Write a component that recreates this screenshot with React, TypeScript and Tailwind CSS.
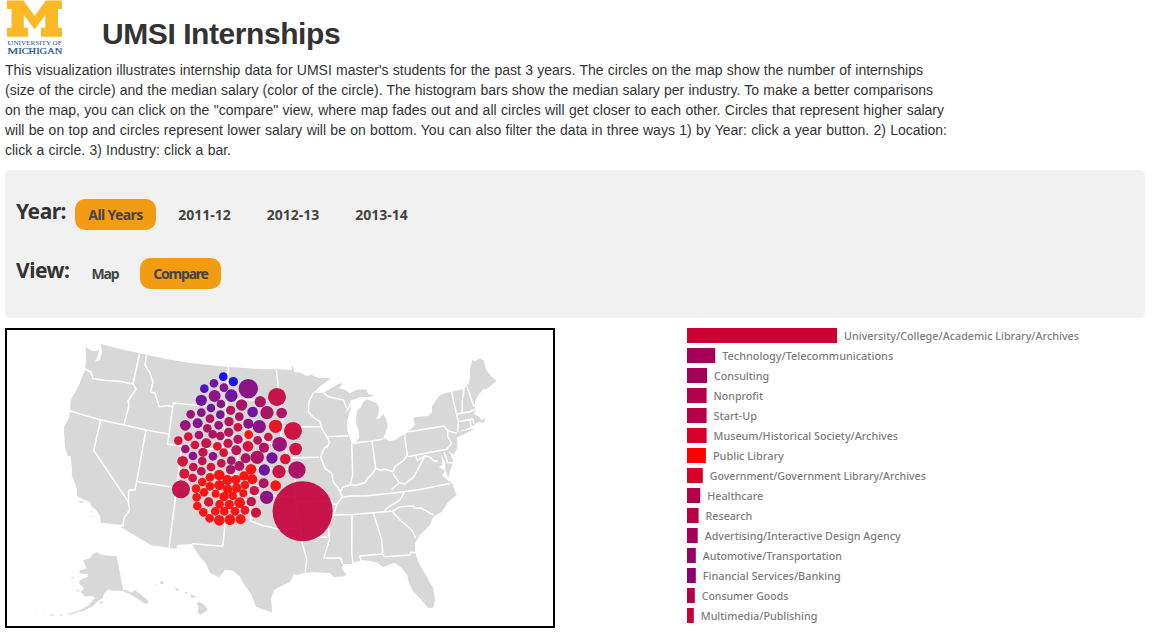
import React from "react";

type Circle = [number, number, number, number];

// x, y, radius, salary position (0 = high / blue, 1 = low / red)
const circles: Circle[] = [
  [174,43,13,0],[204,58,14,.03],[146,63,13,.42],[117,79,13,.25],[176,76,13,.48],[249,79,29,.5],
  [148,101,18,.53],[198,100,19,.4],[108,114,17,.4],[335,104,27,.76],[285,118,17,.65],[229,128,17,.63],
  [167,125,13,.52],[137,137,13,.4],[196,144,14,.7],[76,156,13,.58],[108,151,13,.5],[165,157,13,.45],
  [134,169,13,.68],[222,163,13,.65],[262,149,16,.4],[305,151,20,.65],[349,152,16,.65],[60,189,16,.57],
  [97,183,15,.5],[160,189,13,.55],[191,178,14,.7],[218,195,13,.8],[249,184,15,.5],[282,193,20,.5],
  [331,192,20,.92],[383,206,27,.8],[126,198,13,.68],[101,218,13,.63],[69,223,13,.84],[142,216,13,.68],
  [165,221,13,.68],[190,210,14,.7],[218,231,14,.7],[250,217,13,1],[309,224,13,.8],[277,234,13,.7],
  [39,235,13,.83],[89,248,13,.82],[123,243,15,.78],[156,252,13,.88],[188,243,14,.76],[248,252,16,.82],
  [343,246,22,.58],[60,260,13,.6],[296,256,15,.67],[391,260,19,.8],[113,270,14,.76],[175,271,13,.84],
  [213,264,15,.73],[83,281,13,.48],[143,282,13,.5],[241,288,15,.65],[276,285,20,.67],[320,287,17,.4],
  [360,290,16,.83],[52,297,16,.83],[111,296,13,.73],[168,303,13,.76],[198,295,13,.65],[84,314,13,.76],
  [137,314,13,.82],[108,327,13,.72],[196,322,14,.65],[222,311,15,.65],[257,321,16,1],[297,323,17,.4],
  [341,328,20,.77],[395,323,26,.65],[57,334,15,.85],[82,347,13,.83],[134,345,13,1],[162,338,16,1],
  [186,353,15,1],[212,352,14,1],[236,341,14,1],[261,351,15,1],[111,359,13,1],[134,372,13,1],
  [162,369,15,1],[187,380,14,1],[214,377,14,1],[239,368,13,1],[47,381,27,.75],[92,379,13,1],
  [116,390,13,1],[151,394,12,1],[267,385,14,.8],[295,363,15,.67],[331,370,16,.99],[234,393,12,1],
  [176,403,14,1],[202,400,13,1],[94,405,13,1],[304,405,20,.53],[130,419,14,.86],[96,431,13,1],
  [163,426,13,1],[192,427,14,1],[223,421,16,1],[258,418,14,.76],[114,450,13,1],[150,447,13,1],
  [177,447,13,1],[209,447,13,1],[239,444,13,1],[272,451,15,.83],[133,468,13,1],[162,474,16,1],
  [194,472,16,1],[226,471,15,1],[412,447,90,.77],
];

const salaryColor = (t: number) =>
  `rgb(${Math.round(255 * t)},0,${Math.round(255 * (1 - t))})`;

// label, bar width, salary position, label width
const industries: [string, number, number, number][] = [
  ["University/College/Academic Library/Archives", 150, .8, 235],
  ["Technology/Telecommunications", 28.2, .65, 171],
  ["Consulting", 20, .65, 55],
  ["Nonprofit", 19.6, .71, 49.5],
  ["Start-Up", 19.6, .71, 43.5],
  ["Museum/Historical Society/Archives", 19.6, .84, 184.5],
  ["Public Library", 18.9, 1, 71],
  ["Government/Government Library/Archives", 15.8, .84, 216],
  ["Healthcare", 13.2, .71, 56],
  ["Research", 11.6, .72, 46.5],
  ["Advertising/Interactive Design Agency", 10.7, .65, 196],
  ["Automotive/Transportation", 8.8, .6, 139],
  ["Financial Services/Banking", 8.8, .55, 138],
  ["Consumer Goods", 7.8, .69, 86.5],
  ["Multimedia/Publishing", 6.8, .78, 116.5],
];

const mainland =
  "85.7,346.7 90,350 95,351.5 99,349 98,355 95,362 100,360 102,352 101,344 120,349 140,353.3 165,358.7 190,363 220,366.3 255,368.7 291.7,369.8 291.7,366 293,366 294.3,372 301.7,373.3 306.7,376 311.7,374.7 318.3,378 325,378 331,378.7 321.7,385 313.3,392.7 323,392.7 328,390 338.3,384 342.5,383.3 339.3,388.3 345,389.7 350,393.3 356,390 361.7,389.3 366.7,390 368.3,394 375,395.7 366.7,397.3 360,396.7 355,399.3 351,400 349,405 345,413.3 351.7,405.7 349.3,413.3 347,421.7 347.3,430 349.3,436.7 351.7,443.3 355,442.7 359,438.3 359.3,433.3 356.7,425 356,418.3 357.3,410 360.7,407.7 363.3,401.7 366.7,399.3 376.7,403.3 379,408.3 378.3,415 376,419.3 380,418.3 382.7,414.3 386,418.3 387.7,426 385.7,431.7 383.3,438.3 390,441 395,440 400,436.7 408.3,431.7 415,425 413.3,418.3 416.7,416.7 428.3,416 432.3,411.7 431.7,406.7 438.3,396.7 441.7,394 451.7,391.7 464,389 466.7,385 469,383.3 470,376.7 470,370 472.3,360 475,361 480,358.3 484,360.7 486,369.3 490,375 496.7,381 491.7,385 486.7,389 483,389.5 478.3,395 475,401.7 474.3,406 475.7,409.3 474,414 479,416.7 481.7,420 485,417.7 484,422.7 478,422 473.3,426 466.7,428.7 458.3,432 475,428.3 466.7,432.7 456.7,437.7 457.3,440 457.3,448.3 453.5,455 449,451 453.3,461 450,471.7 448.3,478.3 445.5,470 445,462 441.5,455 442.5,465 439,467 445,471 442,475 447.7,480 451.7,483.3 453,486 456.7,495 448.3,501.7 441.7,511.7 433.3,516.7 430,525 420,535 415,543.3 415,551.7 418.3,561.7 426.7,576.7 433.3,588.3 435,600 433.3,607.7 428.3,608.3 420,598.3 413.3,591.7 409,583.3 407.3,575 401.7,568.3 395,562.7 388.3,565 383.3,567.3 376.7,562.3 363.3,560 356.7,561.7 350,564 343.3,564 341.7,568.3 346.7,575 341.7,576.7 333.3,576.7 330,573 323.3,572.7 313.3,572.3 305,572.7 296.7,575 294,574 290,581.7 280,586.7 274,590 271,598.3 272.3,612.7 265,610 256,606.7 251.7,595 243.3,583.3 240,576.7 233.3,570.7 225,570 219,577.3 210,572.7 205,561.7 200,557.3 191.7,544 176.7,545 176.7,548.7 169,547.7 151,545 121,527.3 122.3,525 100.7,522.7 100,516 96,510 91.7,506.7 90,502.5 83.3,499.3 76.7,496 77,489 75,483.3 71.7,475 72,468 70.5,456 67.5,456 65,446.7 64,432 64,426.7 69,418.3 70,410 70.7,400 78.3,386.7 85,370 86,360";

const stateLines = [
  "85,369 91,372 93,378.5 105,380.5 118,381 133,384",
  "139.5,353.5 133,384 136,389 128,401 129,405 124,425",
  "146.5,355.3 145,365 150,373 153,382 150.7,391.7 155,393.3 159.3,406.7 168,405.5 172.5,407",
  "69.3,410.7 100.7,420 124,425 146,430 168.5,434",
  "225.7,408 173.3,402.9 167.7,444.3 182,446.3 223,450 238,452 237,466",
  "228.3,367 226.7,402 223,450",
  "182,446 176.7,487.7 169,547.7",
  "146,430 136.7,481.7 135,490 129,490 128.3,501.7 129.5,510 124,518.3 122.7,526.7",
  "100.7,420 93.7,450.5 128.3,501.7",
  "136.7,481.7 176.7,487.7 226,493 255,495 295.7,497",
  "227,493 225,525.3 222.7,546.3 191.7,543.7",
  "226,499 250,500.5 250.7,521 256,523 263.3,525.7 270,527 278.3,529.3 286,529 293,528 301.7,532.7",
  "237,466 235,494", "237,467 292,469.5",
  "276.5,370 278.3,388 281.7,401.7 280.5,408 282.5,412 282.3,426.7 281,434 285,447 287,457 293,470 295,478 295.7,501 298,520 301.7,533 302.3,543.3 306.7,559 305.3,572",
  "227,399 255,400 281,401.5", "225,436 262,438 270,443 279,445",
  "282.3,427 320,426.7", "287,458 319,457.3",
  "313.3,392.7 309,401.7 308.3,411.7 313,417 320,421.7 321.7,428.3 326.7,436.7 329.3,441.7 328,446 324,448.3 320.7,457.3 325,468.3 331.7,473.3 333.3,481.7 338.3,488.3 342.3,496.7 336.7,505 334.3,513.3 328.3,525 329.3,540 326.7,548.3 324,558 340.7,558 342.7,564",
  "301.7,537.3 327.3,537.3", "295.7,501.7 331.7,500.7 333,504.5 337,504",
  "326.7,436.7 348.3,435.7", "323.3,392.7 328.3,396.7 343.3,400 346.7,408.3",
  "351.7,443.3 352.7,475 350,485",
  "340,492 343,487 350,485 357,485 365,482.7 368,478 372.7,473.3 375.7,468.3 380,470 385,469.3 392.7,471.7 395,466.7 403.3,460.7 407.3,455 404.3,433.3",
  "352.3,443.3 372,441 383.3,439", "372,441 375.7,468.3",
  "409.3,431.7 444,426 447.7,430.7 456.7,433.3",
  "447.7,430.7 447.7,436.7 451.7,443.3 446.7,449.3 407.3,456.7",
  "416,456 417.3,460.7 425,456 418.3,468.3 413.3,477.3 405,484 399.3,482.7 392.7,473.3",
  "425,456 430,457 434,461 438,461", "444,451.7 447.7,462.7 453,462.7",
  "399.3,482.7 391.7,489.5", "341.7,497.3 351,496 366.7,495.7 396.7,492.7 420,489.5 450,483.5",
  "404,492.7 400,500 386.7,508.3 384,512", "334.3,515 352,514.5 373.3,512.7 393.3,511 400,506.7 413.3,506 415,508 421.7,508.3 433.3,515",
  "392.3,511.7 400,520 411.7,530 415.7,538", "352,514.7 351.7,553 353,563.3",
  "373.3,512.7 381.7,540 382.7,552.7", "361,561 360,556 382.7,554 385,556.7 410,555 411,552 415,553",
  "451.7,391.7 454,403.3 456.7,415 458.3,421.7 457.7,431.7", "464,389 462.3,401.7 462.3,412.7",
  "466.7,385.7 474,406.7", "456.7,414 470,411.7 475,409.3", "458.3,421.7 472.7,419 474,424", "470,420 471,427",
];

function IntroLine({ width, children }: { width: string; children: string }) {
  return <span className={`block whitespace-nowrap [text-align-last:justify] ${width}`}>{children}</span>;
}

function FilterButton({ label, width, active }: { label: string; width: string; active?: boolean }) {
  return (
    <button
      className={`h-[31px] shrink-0 rounded-[10px] text-center text-[14px] leading-[30px] font-bold whitespace-nowrap text-[#444] ${width} ${active ? "bg-[#f39c12]" : ""}`}
    >
      {label}
    </button>
  );
}

function Logo() {
  return (
    <svg className="h-[57px] w-[64px] shrink-0" viewBox="0 0 64 57">
      <path
        fill="#fdb827"
        d="M7 .5H23.5L34.7 16L45.7 .5H62V9H58V27.7H62V36.7H41V27.7H45.3V15L34.7 29.5L23.8 15V27.7H28V36.7H7V27.7H11.5V9H7Z"
      />
      <g fill="#245590" className="font-['Liberation_Serif',serif]">
        <text x="7.2" y="45.3" fontSize="7" textLength="54.5" lengthAdjust="spacingAndGlyphs">U<tspan fontSize="5.8">NIVERSITY OF</tspan></text>
        <text x="7.2" y="53.8" fontSize="9" textLength="55" lengthAdjust="spacingAndGlyphs" stroke="#245590" strokeWidth=".2">M<tspan fontSize="7.6">ICHIGAN</tspan></text>
      </g>
    </svg>
  );
}

function InternshipMap() {
  return (
    <div className="h-[300px] w-[550px] shrink-0 border-2 border-black bg-white">
      <svg className="block h-[296px] w-[546px]" viewBox="7 330 546 296">
        <g fill="#d8d8d8">
          <polygon points={mainland} />
          <g transform="translate(50 440) scale(.33333)">
            <path d="M140 337L155 344L180 348L200 348L219 448L235 452L245 458L254 450L270 462L290 478L296 486L287 493L260 475L238 461L215 452L185 452L175 448L162 461L158 475L143 484L126 500L100 512L60 524L50 522L85 513L115 497L135 472L122 468L105 470L92 456L102 444L87 430L90 420L113 410L114 403L88 400L90 390L110 386L100 361L120 355L128 343Z" />
            <path d="M328 426L340 424L341 431L332 433ZM374 442L384 446L389 451L379 452ZM402 456L414 457L411 462ZM422 463L438 469L431 474L421 470ZM443 485L460 491L474 509L450 525L443 516L446 500L440 492ZM62 408L76 414L68 415ZM78 451L88 450L87 456ZM145 490L158 482L156 490ZM0 524L12 523L14 526L0 527ZM25 525L36 524L38 528ZM-20 518L-12 521L-14 523ZM-45 508L-36 512L-39 513ZM316 433L321 431V435ZM85 184L100 184L101 188H88ZM121 210L128 216L125 219ZM120 227L129 230L124 232Z" />
          </g>
        </g>
        <g fill="none" stroke="#fff" strokeWidth="1.5" strokeLinejoin="round">
          {stateLines.map((points) => <polyline key={points} points={points} />)}
        </g>
        <g transform="translate(165.3 362.3) scale(.33333)" fillOpacity=".91">
          {circles.map(([x, y, r, t]) => (
            <circle key={`${x}-${y}`} cx={x} cy={y} r={r} fill={salaryColor(t)} />
          ))}
        </g>
      </svg>
    </div>
  );
}

function IndustryChart() {
  return (
    <svg className="block h-[300px] w-[458px] shrink-0" viewBox="687 328 458 300">
      <g className="font-['Noto_Sans',sans-serif] font-medium" fontSize="11.5" fill="#7c7c7c">
        {industries.map(([label, width, t, labelWidth], i) => (
          <g key={label}>
            <rect x="687" y={328 + i * 20} width={width} height="15" fill={salaryColor(t)} />
            <text x={687 + width + 7} y={340 + i * 20} textLength={labelWidth} lengthAdjust="spacingAndGlyphs">{label}</text>
          </g>
        ))}
      </g>
    </svg>
  );
}

export default function App() {
  return (
    <main className="h-[633px] w-[1157px] overflow-hidden bg-white font-['Liberation_Sans',sans-serif] text-[#333]">
      <header className="flex h-[60px]">
        <Logo />
        <h1 className="ml-[38px] pt-[14px] text-[30px] leading-[40px] font-bold tracking-[-0.43px] whitespace-nowrap">UMSI Internships</h1>
      </header>
      <p className="pl-[5px] text-[14px] leading-[20px]">
        <IntroLine width="w-[918px]">This visualization illustrates internship data for UMSI master's students for the past 3 years. The circles on the map show the number of internships</IntroLine>
        <IntroLine width="w-[928px]">(size of the circle) and the median salary (color of the circle). The histogram bars show the median salary per industry. To make a better comparisons</IntroLine>
        <IntroLine width="w-[939px]">on the map, you can click on the "compare" view, where map fades out and all circles will get closer to each other. Circles that represent higher salary</IntroLine>
        <IntroLine width="w-[942px]">will be on top and circles represent lower salary will be on bottom. You can also filter the data in three ways 1) by Year: click a year button. 2) Location:</IntroLine>
        <IntroLine width="w-[226px]">click a circle. 3) Industry: click a bar.</IntroLine>
      </p>
      <section className="mt-[10px] ml-[5px] h-[148px] w-[1140px] rounded-[5px] bg-[#f1f1f1] pt-[29px] pl-[11px] font-['Noto_Sans',sans-serif]">
        <div className="flex h-[31px]">
          <h2 className="w-[59px] text-[21px] leading-[25px] font-bold tracking-[-0.5px]">Year:</h2>
          <div className="flex gap-[9px]">
            <FilterButton label="All Years" width="w-[81px] tracking-[-0.6px]" active />
            <FilterButton label="2011-12" width="w-[79px]" />
            <FilterButton label="2012-13" width="w-[80px]" />
            <FilterButton label="2013-14" width="w-[79px]" />
          </div>
        </div>
        <div className="mt-[28px] flex h-[31px]">
          <h2 className="w-[63px] text-[21px] leading-[25px] font-bold tracking-[-0.5px]">View:</h2>
          <div className="flex gap-[9px]">
            <FilterButton label="Map" width="w-[52px] tracking-[-1.1px]" />
            <FilterButton label="Compare" width="w-[81px] tracking-[-1.2px]" active />
          </div>
        </div>
      </section>
      <div className="mt-[10px] ml-[5px] flex gap-[132px]">
        <InternshipMap />
        <IndustryChart />
      </div>
    </main>
  );
}
